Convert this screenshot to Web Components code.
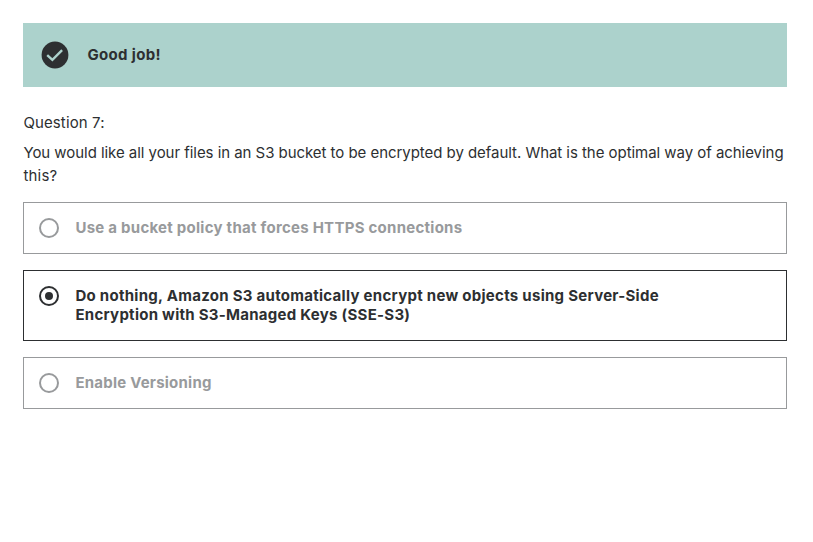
<!DOCTYPE html>
<html lang="en">
<head>
<meta charset="utf-8">
<title>Quiz question</title>
<style>
body{margin:0;background:#fff;color:#2d2f31;font:15px/22.4px Inter,"Liberation Sans",Arial,sans-serif}
</style>
</head>
<body>
<quiz-page>
  <quiz-alert slot="alert"><quiz-line spacing="0.34">Good job!</quiz-line></quiz-alert>
  <quiz-prompt>
    <quiz-line slot="number" spacing="0.12">Question 7:</quiz-line>
    <quiz-line spacing="-0.046">You would like all your files in an S3 bucket to be encrypted by default. What is the optimal way of achieving</quiz-line>
    <quiz-line spacing="0.2">this?</quiz-line>
  </quiz-prompt>
  <quiz-option><quiz-line spacing="0.26">Use a bucket policy that forces HTTPS connections</quiz-line></quiz-option>
  <quiz-option checked><quiz-line spacing="0.28">Do nothing, Amazon S3 automatically encrypt new objects using Server-Side</quiz-line><quiz-line spacing="0.27">Encryption with S3-Managed Keys (SSE-S3)</quiz-line></quiz-option>
  <quiz-option><quiz-line spacing="0.23">Enable Versioning</quiz-line></quiz-option>
</quiz-page>
<script>
class QuizElement extends HTMLElement {
  constructor() {
    super();
    this.attachShadow({ mode: 'open' }).innerHTML = this.constructor.markup;
  }
}
class QuizLine extends QuizElement {
  static markup = `<style>:host{display:block;width:max-content;white-space:nowrap;padding-left:.4px}</style><slot></slot>`;
  connectedCallback() { this.style.letterSpacing = (this.getAttribute('spacing') || 0) + 'px'; }
}
class QuizPage extends QuizElement {
  static markup = `<style>
    :host{display:block;padding:23px 26px 0 23px}
    .options{display:flex;flex-direction:column;gap:16px}
    ::slotted(quiz-prompt){margin-bottom:-1px}
  </style><slot name="alert"></slot><div class="options"><slot></slot></div>`;
}
class QuizAlert extends QuizElement {
  static markup = `<style>
    :host{display:flex;align-items:center;gap:18px;height:64px;padding-left:18px;box-sizing:border-box;background:#acd2cc;font-weight:700}
    svg{display:block}
  </style>
  <svg width="28" height="28" viewBox="0 0 28 28"><circle cx="14" cy="14" r="13.4" fill="#2d2f31"/><path d="M6.2 14.1 11.4 18.8 21.1 9.2" fill="none" stroke="#acd2cc" stroke-width="2.4"/></svg><slot></slot>`;
}
class QuizPrompt extends QuizElement {
  static markup = `<style>
    :host{display:block;padding-top:25px}
    .text{margin-top:8px}
  </style><slot name="number"></slot><div class="text"><slot></slot></div>`;
}
class QuizOption extends QuizElement {
  static markup = `<style>
    :host{display:flex;gap:16px;box-sizing:border-box;min-height:52px;padding:15px;border:1px solid #989a9c;color:#989a9c;font-weight:700;line-height:19px}
    :host([checked]){border-color:#2d2f31;color:#2d2f31;min-height:71px}
    svg{display:block;flex:none}
    .dot{display:none}
    :host([checked]) .dot{display:block}
  </style>
  <svg width="20" height="20" viewBox="0 0 20 20"><circle cx="10" cy="10" r="9" fill="none" stroke="currentColor" stroke-width="2"/><circle class="dot" cx="10" cy="10" r="4" fill="currentColor"/></svg><div><slot></slot></div>`;
}
customElements.define('quiz-line', QuizLine);
customElements.define('quiz-page', QuizPage);
customElements.define('quiz-alert', QuizAlert);
customElements.define('quiz-prompt', QuizPrompt);
customElements.define('quiz-option', QuizOption);
</script>
</body>
</html>
